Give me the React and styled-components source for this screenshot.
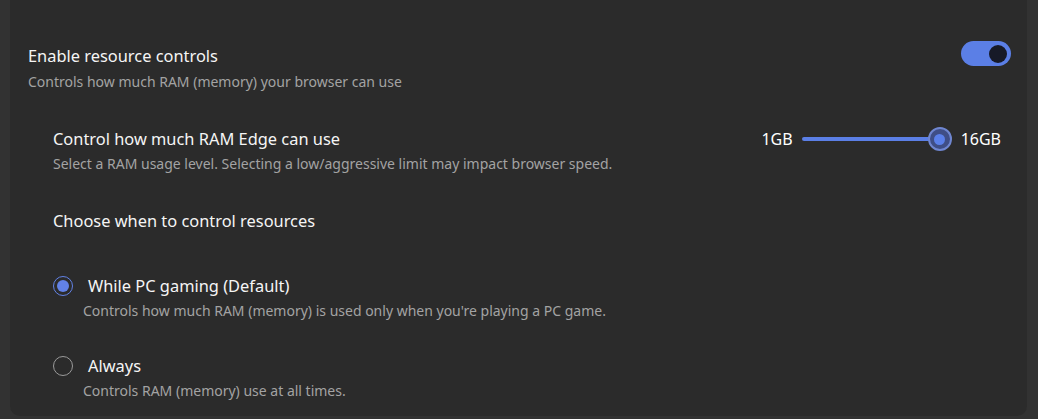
import styled, { createGlobalStyle } from "styled-components"

const Global = createGlobalStyle`
  html, body {
    margin: 0;
    background: #323232;
    font-family: "Noto Sans", "Open Sans", sans-serif;
  }
`

const Page = styled.div`
  height: 419px;
  padding: 0 11px 0 10px;
  box-sizing: border-box;
  overflow: hidden;
`

const Card = styled.div`
  background: #2b2b2b;
  height: 416px;
  border-radius: 0 0 10px 10px;
  padding: 45px 16px 0 18px;
  box-sizing: border-box;
  color: #fff;
`

const Row = styled.div`
  display: flex;
  align-items: flex-start;
  justify-content: space-between;
  margin-bottom: ${p => p.$gap || 0}px;
`

const Title = styled.div`
  font-size: 16.4px;
  line-height: 22px;
  color: #f5f5f5;
  margin-top: ${p => p.$top || 0}px;
`

const Sub = styled.div`
  font-size: 14px;
  line-height: 20px;
  color: #a3a3a3;
  margin-top: ${p => p.$top || 4}px;
`

const Toggle = styled.div`
  width: 50px;
  height: 25px;
  border-radius: 13px;
  background: #5b7fe6;
  display: flex;
  align-items: center;
  justify-content: flex-end;
  padding: 0 4px;
  box-sizing: border-box;
  margin-top: -4px;
`

const Knob = styled.div`
  width: 18px;
  height: 18px;
  border-radius: 50%;
  background: #171a28;
`

const Slider = styled.div`
  display: flex;
  align-items: center;
  gap: 9px;
  font-size: 16px;
  line-height: 22px;
  margin-right: 10px;
`

const Track = styled.div`
  width: 138px;
  height: 4px;
  border-radius: 2px;
  background: #5b7fe6;
  position: relative;
  margin-right: 12px;
`

const Thumb = styled.div`
  position: absolute;
  right: -12px;
  top: -10px;
  width: 20px;
  height: 20px;
  border-radius: 50%;
  background: #3f4e86;
  border: 2px solid #6f86d0;
  display: flex;
  align-items: center;
  justify-content: center;
  &::after {
    content: "";
    width: 11px;
    height: 11px;
    border-radius: 50%;
    background: #5b80ea;
  }
`

const Section = styled.div`
  padding-left: 25px;
`

const Option = styled.div`
  display: grid;
  grid-template-columns: 35px 1fr;
  align-items: center;
  margin-top: ${p => p.$top}px;
`

const Radio = styled.div`
  width: 20px;
  height: 20px;
  border-radius: 50%;
  box-sizing: border-box;
  border: 1.5px solid ${p => p.$on ? "#6282e6" : "#9a9a9a"};
  display: flex;
  align-items: center;
  justify-content: center;
  &::after {
    content: "";
    display: ${p => p.$on ? "block" : "none"};
    width: 12px;
    height: 12px;
    border-radius: 50%;
    background: #6282e6;
  }
`

const OptionSub = styled(Sub)`
  grid-column: 2;
  margin-left: -5px;
  margin-top: 4px;
`

export default function App() {
  return (
    <Page>
      <Global />
      <Card>
        <Row $gap={36}>
          <div>
            <Title>Enable resource controls</Title>
            <Sub $top={5}>Controls how much RAM (memory) your browser can use</Sub>
          </div>
          <Toggle><Knob /></Toggle>
        </Row>
        <Section>
          <Row>
            <div>
              <Title>Control how much RAM Edge can use</Title>
              <Sub>Select a RAM usage level. Selecting a low/aggressive limit may impact browser speed.</Sub>
            </div>
            <Slider>
              <span>1GB</span>
              <Track><Thumb /></Track>
              <span>16GB</span>
            </Slider>
          </Row>
          <Title $top={36}>Choose when to control resources</Title>
          <Option $top={43}>
            <Radio $on />
            <Title>While PC gaming (Default)</Title>
            <OptionSub>Controls how much RAM (memory) is used only when you're playing a PC game.</OptionSub>
          </Option>
          <Option $top={34}>
            <Radio />
            <Title>Always</Title>
            <OptionSub>Controls RAM (memory) use at all times.</OptionSub>
          </Option>
        </Section>
      </Card>
    </Page>
  )
}
